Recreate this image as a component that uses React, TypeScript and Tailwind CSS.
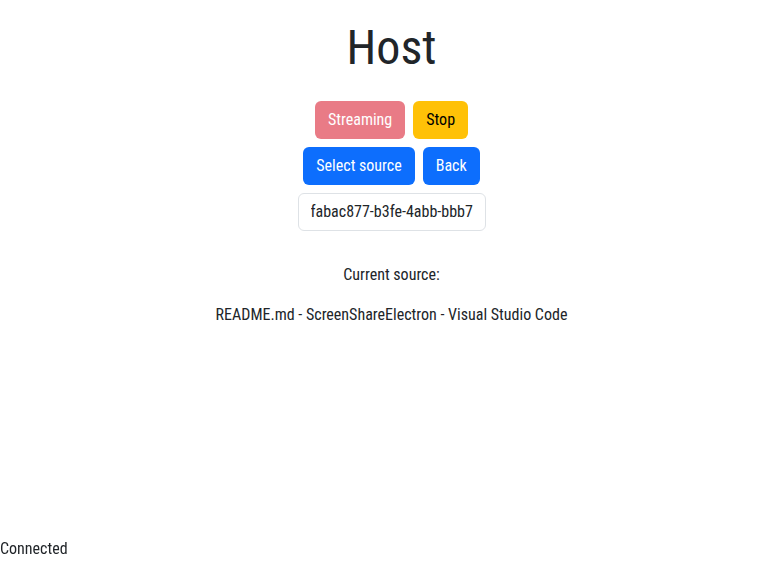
export default function App() {
  return (
    <div className="min-h-screen bg-white text-[#212529] font-['Roboto_Condensed','Roboto',sans-serif] text-base">
      <div className="flex flex-col items-center pl-[3px] pt-[19px] text-center">
        <h1 className="text-[48px] leading-[1.2] font-normal">Host</h1>
        <div className="mt-6 flex gap-2">
          <button className="rounded-md border border-transparent bg-[#e97b86] px-3 py-1.5 leading-6 text-white">
            Streaming
          </button>
          <button className="rounded-md border border-transparent bg-[#ffc107] px-3 py-1.5 leading-6 text-black">
            Stop
          </button>
        </div>
        <div className="mt-2 flex gap-2">
          <button className="rounded-md border border-transparent bg-[#0d6efd] px-3 py-1.5 leading-6 text-white">
            Select source
          </button>
          <button className="rounded-md border border-transparent bg-[#0d6efd] px-3 py-1.5 leading-6 text-white">
            Back
          </button>
        </div>
        <input
          readOnly
          value="fabac877-b3fe-4abb-bbb7"
          className="mt-2 w-[188px] rounded-md border border-[#dee2e6] px-3 py-1.5 text-center leading-6 text-[#212529] outline-none"
        />
        <p className="mt-8 leading-6">Current source:</p>
        <p className="mt-4 leading-6">README.md - ScreenShareElectron - Visual Studio Code</p>
      </div>
      <div className="fixed bottom-0 left-0 leading-6">Connected</div>
    </div>
  )
}
